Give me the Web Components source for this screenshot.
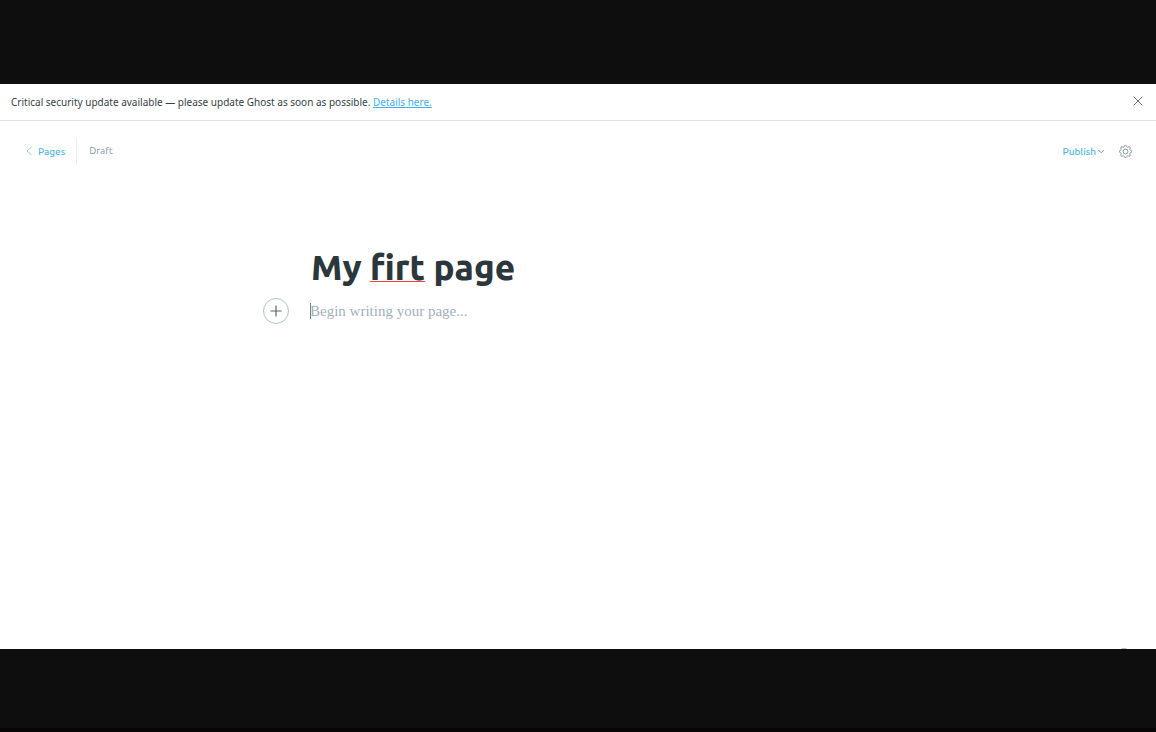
<!DOCTYPE html>
<html lang="en">
<head>
<meta charset="utf-8">
<title>My firt page</title>
<style>
  body {
    margin: 0;
    background: #0e0e0e;
    font-family: Ubuntu, "Noto Sans", "Open Sans", sans-serif;
    color: #343f44;
  }
</style>
</head>
<body>
<editor-app></editor-app>

<template id="app-template">
  <style>
    :host {
      display: grid;
      grid-template-rows: 84px 1fr 79px 4px;
      min-height: 100vh;
    }
    .screen {
      grid-row: 2;
      display: flex;
      flex-direction: column;
      background: #fff;
      overflow: hidden;
    }
    .edge { grid-row: 4; background: #0a0407; }
    editor-canvas { flex: 1; }
  </style>
  <div class="screen">
    <notice-bar>Critical security update available — please update Ghost as soon as possible. <a slot="link" href="#details">Details here.</a></notice-bar>
    <editor-header>Draft</editor-header>
    <editor-canvas></editor-canvas>
    <help-button></help-button>
  </div>
  <div class="edge"></div>
</template>

<template id="notice-template">
  <style>
    :host {
      display: flex;
      align-items: center;
      justify-content: space-between;
      height: 36px;
      padding: 0 13px 0 11px;
      border-bottom: 1px solid #dfe1e3;
      font-family: "Noto Sans", sans-serif;
      font-size: 10px;
      line-height: 16px;
    }
    ::slotted(a) { color: #3eb0ef; text-decoration: underline; }
    button {
      display: flex;
      padding: 0 0 2px;
      border: 0;
      background: none;
    }
  </style>
  <div><slot></slot><slot name="link"></slot></div>
  <button type="button" aria-label="Close">
    <svg width="10" height="10" viewBox="0 0 10 10" fill="none" stroke="#6b7478" stroke-width="1"><path d="M.7.7l8.600 8.600M9.300.7L.7 9.300"/></svg>
  </button>
</template>

<template id="header-template">
  <style>
    :host {
      display: flex;
      align-items: center;
      justify-content: space-between;
      padding: 17px 24px 0 25px;
      font-size: 10px;
      line-height: 14px;
    }
    .group { display: flex; align-items: center; }
    .back {
      display: flex;
      align-items: center;
      gap: 5px;
      height: 26px;
      padding-right: 11px;
      border-right: 1px solid #e5eff5;
      color: #4db7f1;
      font-weight: 500;
      text-decoration: none;
    }
    .label { padding-top: 1px; }
    .status { padding-left: 12px; color: #8499a3; }
    button {
      display: flex;
      align-items: center;
      gap: 1px;
      padding: 0;
      border: 0;
      background: none;
      font: inherit;
      font-weight: 500;
      color: #4db7f1;
    }
    .actions { gap: 14px; }
  </style>
  <div class="group">
    <a class="back" href="#pages">
      <svg width="8" height="10" viewBox="0 0 8 10" fill="none" stroke="#8fcff4" stroke-width="1"><path d="M6.500 1L2 5l4.500 4"/></svg>
      <span class="label">Pages</span>
    </a>
    <span class="status"><slot></slot></span>
  </div>
  <div class="group actions">
    <button type="button"><span class="label">Publish</span>
      <svg width="8" height="6" viewBox="0 0 8 6" fill="none" stroke="#7f97a3" stroke-width="1"><path d="M1.500 2l2.700 2.700L7 2"/></svg>
    </button>
    <button type="button" aria-label="Settings">
      <svg width="13" height="13" viewBox="0 0 24 24" fill="none" stroke="#738a94" stroke-width="1.700" stroke-linejoin="round"><circle cx="12" cy="12" r="4.5"/><path d="M14 2a2.100 2.100 0 0 0-4 0l-.3 1a2 2 0 0 1-2.400 1l-1-.5a2.100 2.100 0 0 0-2.800 2.800l.5 1a2 2 0 0 1-1 2.400l-1 .3a2.100 2.100 0 0 0 0 4l1 .3a2 2 0 0 1 1 2.400l-.5 1a2.100 2.100 0 0 0 2.800 2.800l1-.5a2 2 0 0 1 2.400 1l.3 1a2.100 2.100 0 0 0 4 0l.3-1a2 2 0 0 1 2.400-1l1 .5a2.100 2.100 0 0 0 2.800-2.800l-.5-1a2 2 0 0 1 1-2.400l1-.3a2.100 2.100 0 0 0 0-4l-1-.3a2 2 0 0 1-1-2.400l.5-1a2.100 2.100 0 0 0-2.800-2.800l-1 .5a2 2 0 0 1-2.400-1z"/></svg>
    </button>
  </div>
</template>

<template id="canvas-template">
  <style>
    :host {
      display: block;
      box-sizing: border-box;
      width: 100%;
      max-width: 630px;
      margin: 0 auto;
      padding: 79px 48px 0;
    }
    h1 {
      margin: 0;
      font-size: 35px;
      line-height: 48px;
      font-weight: 800;
      color: #2c373c;
      outline: none;
    }
    .misspelled {
      background: linear-gradient(#ff3b3b, #ff3b3b) 0 34px / 100% 1px no-repeat;
    }
    .row {
      display: flex;
      align-items: center;
      gap: 21px;
      margin: 6px 0 0 -48px;
    }
    button {
      display: flex;
      align-items: center;
      justify-content: center;
      flex: none;
      width: 26px;
      height: 26px;
      padding: 0;
      border: 1px solid #b3c2c9;
      border-radius: 50%;
      background: #fff;
    }
    .field {
      display: flex;
      flex: 1;
      align-items: center;
    }
    .caret { width: 1px; height: 16px; margin-right: -1px; background: #738a94; }
    input {
      flex: 1;
      min-width: 0;
      height: 26px;
      padding: 1px 0 0;
      border: 0;
      outline: none;
      background: none;
      font: 15px "Liberation Serif", serif;
    }
    input::placeholder { color: #9fb1ba; opacity: 1; }
  </style>
  <h1 contenteditable="true" spellcheck="false" role="textbox" aria-label="Page title">My <span class="misspelled">firt</span> page</h1>
  <div class="row">
    <button type="button" aria-label="Add a card">
      <svg width="12" height="12" viewBox="0 0 12 12" fill="none" stroke="#56666e" stroke-width="1.200"><path d="M6 .5v11M.5 6h11"/></svg>
    </button>
    <div class="field">
      <span class="caret"></span>
      <input type="text" aria-label="Page content" placeholder="Begin writing your page...">
    </div>
  </div>
</template>

<template id="help-template">
  <style>
    :host {
      display: flex;
      justify-content: flex-end;
      height: 1px;
      padding-right: 25px;
    }
    button {
      flex: none;
      width: 14px;
      height: 14px;
      padding: 0;
      border: 1px solid #9fb1ba;
      border-radius: 50%;
      background: #fff;
    }
  </style>
  <button type="button" aria-label="Help"></button>
</template>

<script>
  const define = (name, templateId) => {
    customElements.define(name, class extends HTMLElement {
      constructor() {
        super();
        const template = document.getElementById(templateId);
        this.attachShadow({ mode: "open" }).append(template.content.cloneNode(true));
      }
    });
  };
  define("notice-bar", "notice-template");
  define("editor-header", "header-template");
  define("editor-canvas", "canvas-template");
  define("help-button", "help-template");
  define("editor-app", "app-template");
</script>
</body>
</html>
